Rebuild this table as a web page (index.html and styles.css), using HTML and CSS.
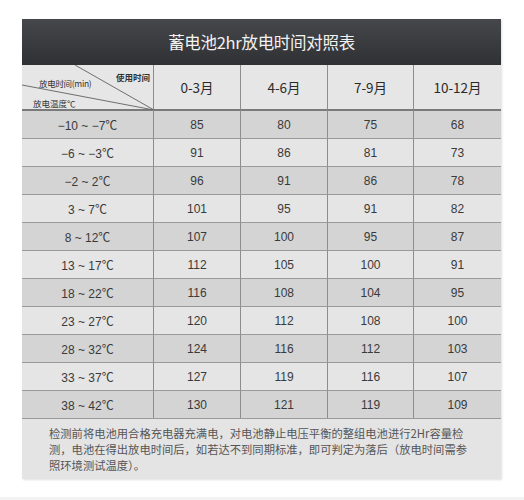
FILE: index.html
```html
<!DOCTYPE html>
<html>
<head>
<meta charset="utf-8">
<link rel="stylesheet" href="styles.css">
</head>
<body>
<div class="page">
  <div class="sheet">
    <div class="title">蓄电池2hr放电时间对照表</div>
    <div class="grid">
      <div class="cell head diag">
        <svg class="diag-lines" width="132" height="45" viewBox="0 0 132 45">
          <line x1="53" y1="0" x2="132" y2="45" stroke="#6e6e6e" stroke-width="1"/>
          <line x1="0" y1="20" x2="132" y2="45" stroke="#6e6e6e" stroke-width="1"/>
        </svg>
        <span class="lbl lbl-use">使用时间</span>
        <span class="lbl lbl-time">放电时间(min)</span>
        <span class="lbl lbl-temp">放电温度℃</span>
      </div>
      <div class="cell head">0-3月</div>
      <div class="cell head">4-6月</div>
      <div class="cell head">7-9月</div>
      <div class="cell head last">10-12月</div>

      <div class="cell r1">−10 ~ −7℃</div><div class="cell r1">85</div><div class="cell r1">80</div><div class="cell r1">75</div><div class="cell r1 last">68</div>
      <div class="cell r2">−6 ~ −3℃</div><div class="cell r2">91</div><div class="cell r2">86</div><div class="cell r2">81</div><div class="cell r2 last">73</div>
      <div class="cell r1">−2 ~ 2℃</div><div class="cell r1">96</div><div class="cell r1">91</div><div class="cell r1">86</div><div class="cell r1 last">78</div>
      <div class="cell r2">3 ~ 7℃</div><div class="cell r2">101</div><div class="cell r2">95</div><div class="cell r2">91</div><div class="cell r2 last">82</div>
      <div class="cell r1">8 ~ 12℃</div><div class="cell r1">107</div><div class="cell r1">100</div><div class="cell r1">95</div><div class="cell r1 last">87</div>
      <div class="cell r2">13 ~ 17℃</div><div class="cell r2">112</div><div class="cell r2">105</div><div class="cell r2">100</div><div class="cell r2 last">91</div>
      <div class="cell r1">18 ~ 22℃</div><div class="cell r1">116</div><div class="cell r1">108</div><div class="cell r1">104</div><div class="cell r1 last">95</div>
      <div class="cell r2">23 ~ 27℃</div><div class="cell r2">120</div><div class="cell r2">112</div><div class="cell r2">108</div><div class="cell r2 last">100</div>
      <div class="cell r1">28 ~ 32℃</div><div class="cell r1">124</div><div class="cell r1">116</div><div class="cell r1">112</div><div class="cell r1 last">103</div>
      <div class="cell r2">33 ~ 37℃</div><div class="cell r2">127</div><div class="cell r2">119</div><div class="cell r2">116</div><div class="cell r2 last">107</div>
      <div class="cell r1">38 ~ 42℃</div><div class="cell r1">130</div><div class="cell r1">121</div><div class="cell r1">119</div><div class="cell r1 last">109</div>
    </div>
    <div class="note">检测前将电池用合格充电器充满电，对电池静止电压平衡的整组电池进行2Hr容量检<br>测，电池在得出放电时间后，如若达不到同期标准，即可判定为落后（放电时间需参<br>照环境测试温度）。</div>
  </div>
</div>
</body>
</html>
```
FILE: styles.css
```css
html, body {
  margin: 0;
  padding: 0;
  background: #ffffff;
}
.page {
  width: 524px;
  height: 500px;
  padding: 19px 0 0 22px;
  box-sizing: border-box;
  background: linear-gradient(#ffffff 0, #ffffff 497px, #f3f3f3 497px);
  font-family: "Liberation Sans", "Noto Sans CJK SC", sans-serif;
}
.sheet {
  width: 479px;
  box-shadow: 1px 1px 2px rgba(0,0,0,0.12);
}
.title {
  height: 46px;
  background: linear-gradient(#46474a, #2f3033);
  color: #f2f2f2;
  font-family: "Noto Sans CJK SC", "Liberation Sans", sans-serif;
  font-size: 16.5px;
  line-height: 46px;
  text-align: center;
  letter-spacing: -0.3px;
}
.grid {
  display: grid;
  grid-template-columns: 132px 87px 87px 86px 87px;
  grid-auto-rows: 28px;
  grid-template-rows: 45px;
}
.cell {
  display: flex;
  align-items: center;
  justify-content: center;
  font-size: 12px;
  color: #3a3a3a;
  border-right: 1px solid #8d8d8d;
  border-top: 1px solid #9a9a9a;
  box-sizing: border-box;
  white-space: pre;
}
.cell.last {
  border-right: none;
}
.head {
  background: #e6e6e6;
  border-top: none;
  border-bottom: 1px solid #7a7a7a;
  font-size: 13.5px;
  color: #2a2a2a;
  font-family: "Noto Sans CJK SC", "Liberation Sans", sans-serif;
}
.grid > .r1:nth-child(-n+10) {
  border-top: 1px solid #7a7a7a;
}
.r1 {
  background: #d4d4d4;
}
.r2 {
  background: #e5e5e5;
}
.diag {
  position: relative;
  display: block;
}
.diag-lines {
  position: absolute;
  left: 0;
  top: 0;
}
.lbl {
  position: absolute;
  font-size: 8.5px;
  color: #333;
  line-height: 10px;
  white-space: nowrap;
  font-family: "Noto Sans CJK SC", sans-serif;
}
.lbl-use {
  left: 94px;
  top: 7px;
  font-weight: bold;
}
.lbl-time {
  left: 17px;
  top: 13px;
  letter-spacing: -0.3px;
}
.lbl-temp {
  left: 11px;
  top: 33px;
}
.note {
  background: #e4e4e4;
  border-top: 1px solid #9a9a9a;
  padding: 6px 10px 7px 27px;
  height: 61px;
  box-sizing: border-box;
  font-family: "Noto Sans CJK SC", sans-serif;
  font-size: 11.3px;
  line-height: 16px;
  color: #555;
  white-space: nowrap;
}
```
